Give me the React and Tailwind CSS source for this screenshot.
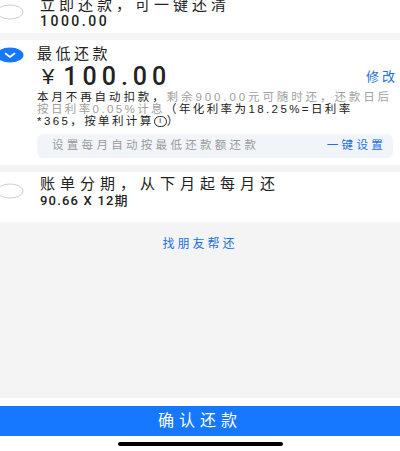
import React from 'react';

function Radio({ checked }) {
  if (checked) {
    return (
      <svg width="28" height="16" viewBox="0 0 28 16" className="-ml-[4px] shrink-0">
        <ellipse cx="14" cy="8" rx="13.5" ry="7.5" fill="#1677ff" />
        <path d="M9.5 6.5 L14 10 L18.5 6.5" fill="none" stroke="#fff" strokeWidth="1.6" strokeLinecap="round" strokeLinejoin="round" />
      </svg>
    );
  }
  return (
    <svg width="28" height="16" viewBox="0 0 28 16" className="-ml-[4px] shrink-0">
      <ellipse cx="14" cy="8" rx="13" ry="7" fill="#fff" stroke="#cfcfcf" strokeWidth="1" />
    </svg>
  );
}

export default function App() {
  return (
    <div className="w-[400px] h-[451px] overflow-hidden bg-[#f4f4f4] flex flex-col font-['Liberation_Sans','Noto_Sans_CJK_SC',sans-serif] text-[#222]">
      {/* 立即还款 */}
      <div className="h-[33px] shrink-0 bg-white flex overflow-hidden">
        <div className="w-[40px] shrink-0 pt-[4px]">
          <Radio />
        </div>
        <div className="-mt-[3px]">
          <div className="text-[15px] leading-[16px] tracking-[4px] whitespace-nowrap">立即还款，可一键还清</div>
          <div className="font-['Roboto',sans-serif] text-[14px] leading-[14px] font-medium tracking-[2.5px] mt-[1px]">1000.00</div>
        </div>
      </div>

      <div className="h-[7px] shrink-0" />

      {/* 最低还款 */}
      <div className="shrink-0 bg-white flex pt-[4px] pb-[7px]">
        <div className="w-[37px] shrink-0 pt-[3px]">
          <Radio checked />
        </div>
        <div className="flex-1 pr-[7px]">
          <div className="h-[20px] flex items-center text-[15px] tracking-[3.5px] whitespace-nowrap">最低还款</div>
          <div className="h-[26px] flex items-center justify-between">
            <div className="flex items-center whitespace-nowrap">
              <span className="text-[22px] leading-[26px] ml-[5px] mr-[9px]">¥</span>
              <span className="font-['Roboto',sans-serif] text-[25px] leading-[26px] font-medium tracking-[5px]">100.00</span>
            </div>
            <span className="text-[13px] text-[#1a6fe0] tracking-[3px] -mr-[5px]">修改</span>
          </div>
          <div className="mt-[1px] text-[11.5px] leading-[12px] tracking-[2.4px] whitespace-nowrap">
            <div className="tracking-[2.9px]">
              <span>本月不再自动扣款，</span>
              <span className="text-[#a0a0a0]">剩余900.00元可随时还，还款日后</span>
            </div>
            <div>
              <span className="text-[#a0a0a0]">按日利率0.05%计息</span>
              <span>（年化利率为18.25%=日利率</span>
            </div>
            <div className="flex items-center">
              <span>*365，按单利计算</span>
              <span className="inline-flex items-center justify-center w-[13px] h-[11px] rounded-full border border-[#222] text-[8px] leading-none tracking-normal">i</span>
              <span>）</span>
            </div>
          </div>
          <div className="mt-[7px] h-[24px] rounded-[6px] bg-[#f1f5fa] flex items-center justify-between pl-[15px] pr-[7px]">
            <span className="text-[11.5px] text-[#9a9a9a] tracking-[3.3px] whitespace-nowrap">设置每月自动按最低还款额还款</span>
            <span className="text-[11.5px] text-[#1a6fe0] tracking-[3.3px] whitespace-nowrap">一键设置</span>
          </div>
        </div>
      </div>

      <div className="h-[7px] shrink-0" />

      {/* 账单分期 */}
      <div className="h-[50px] shrink-0 bg-white flex pt-[4px]">
        <div className="w-[40px] shrink-0 pt-[7px]">
          <Radio />
        </div>
        <div>
          <div className="text-[15px] leading-[16px] tracking-[5px] whitespace-nowrap">账单分期，从下月起每月还</div>
          <div className="font-['Roboto','Noto_Sans_CJK_SC',sans-serif] text-[13px] leading-[15px] font-medium tracking-[1.2px] mt-[1px] whitespace-nowrap">90.66 X 12期</div>
        </div>
      </div>

      {/* 找朋友帮还 */}
      <div className="flex-1 flex justify-center pt-[14px]">
        <span className="text-[12px] leading-[16px] text-[#1a6fe0] tracking-[3px] whitespace-nowrap">找朋友帮还</span>
      </div>

      <div className="shrink-0 bg-white pt-[8px]">
        <button className="w-full h-[30px] bg-[#1677ff] text-white text-[16px] tracking-[5px] flex items-center justify-center">
          确认还款
        </button>
        <div className="h-[15px] flex justify-center pt-[6px]">
          <div className="w-[165px] h-[4px] rounded-full bg-black" />
        </div>
      </div>
    </div>
  );
}
